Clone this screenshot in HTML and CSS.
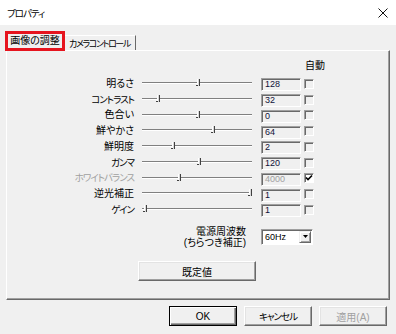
FILE: index.html
```html
<!DOCTYPE html>
<html lang="ja">
<head>
    <meta charset="UTF-8" />
    <meta name="viewport" content="width=device-width, initial-scale=1.0"/>
    <title>プロパティ</title>
    <link rel="stylesheet" href="styles.css">
</head>
<body>

    <div class="titlebar">
        <span class="title kana">プロパティ</span>
        <svg class="close" width="10" height="10" viewBox="0 0 10 10">
            <path d="M0.5 0.5 L9.5 9.5 M9.5 0.5 L0.5 9.5" stroke="#111" stroke-width="1" fill="none"/>
        </svg>
    </div>

    <div class="tabs">
        <div class="tab active">画像の調整</div>
        <div class="tab"><span class="tab-kana">カメラコントロール</span></div>
    </div>

    <div class="panel">
        <div class="head"><span class="auto-label">自動</span></div>

        <div class="row">
            <span class="label">明るさ</span>
            <div class="slider"><div class="track"></div><span class="thumb" style="left:55px"></span></div>
            <span class="edit">128</span>
            <span class="check"></span>
        </div>
        <div class="row">
            <span class="label kana">コントラスト</span>
            <div class="slider"><div class="track"></div><span class="thumb" style="left:15px"></span></div>
            <span class="edit">32</span>
            <span class="check"></span>
        </div>
        <div class="row">
            <span class="label">色合い</span>
            <div class="slider"><div class="track"></div><span class="thumb" style="left:55px"></span></div>
            <span class="edit">0</span>
            <span class="check"></span>
        </div>
        <div class="row">
            <span class="label">鮮やかさ</span>
            <div class="slider"><div class="track"></div><span class="thumb" style="left:70px"></span></div>
            <span class="edit">64</span>
            <span class="check"></span>
        </div>
        <div class="row">
            <span class="label">鮮明度</span>
            <div class="slider"><div class="track"></div><span class="thumb" style="left:30px"></span></div>
            <span class="edit">2</span>
            <span class="check"></span>
        </div>
        <div class="row">
            <span class="label kana">ガンマ</span>
            <div class="slider"><div class="track"></div><span class="thumb" style="left:56px"></span></div>
            <span class="edit">120</span>
            <span class="check"></span>
        </div>
        <div class="row disabled">
            <span class="label kana">ホワイトバランス</span>
            <div class="slider"><div class="track"></div><span class="thumb" style="left:36px"></span></div>
            <span class="edit">4000</span>
            <span class="check on">
                <svg width="8" height="8" viewBox="0 0 8 8"><path d="M1 3.5 L3 5.5 L7 1.5" stroke="#000" stroke-width="1.6" fill="none"/></svg>
            </span>
        </div>
        <div class="row">
            <span class="label">逆光補正</span>
            <div class="slider"><div class="track"></div><span class="thumb" style="left:107px"></span></div>
            <span class="edit">1</span>
            <span class="check"></span>
        </div>
        <div class="row">
            <span class="label kana">ゲイン</span>
            <div class="slider"><div class="track"></div><span class="thumb" style="left:2px"></span></div>
            <span class="edit">1</span>
            <span class="check"></span>
        </div>

        <div class="freq">
            <div class="freq-label">電源周波数<br>(ちらつき補正)</div>
            <div class="select">
                <span class="select-value">60Hz</span>
                <span class="select-btn">
                    <svg width="5" height="3" viewBox="0 0 5 3"><path d="M0 0 H5 L2.5 3 Z" fill="#000"/></svg>
                </span>
            </div>
        </div>

        <button class="btn reset-btn">既定値</button>
    </div>

    <div class="actions">
        <button class="btn default">OK</button>
        <button class="btn"><span class="kana">キャンセル</span></button>
        <button class="btn" disabled>適用(A)</button>
    </div>

</body>
</html>
```

FILE: styles.css
```css
body {
    margin: 0;
    width: 396px;
    height: 334px;
    overflow: hidden;
    background: #f0f0f0;
    font-family: "Liberation Sans", "Noto Sans CJK JP", sans-serif;
    font-size: 10px;
    font-feature-settings: "palt";
    color: #000;
}

/* katakana runs are much narrower in the original UI font */
.kana {
    font-size: 9.5px;
    letter-spacing: -1px;
}

.titlebar {
    height: 25px;
    background: #fff;
    display: flex;
    align-items: center;
    justify-content: space-between;
    padding: 0 8px 0 7px;
}

.tabs {
    display: flex;
    align-items: flex-end;
    height: 19px;
    margin-top: 6px;
    padding-left: 5px;
}

.tab {
    height: 15px;
    line-height: 15px;
    padding: 0 5px 0 4px;
    border-top: 1px solid #fff;
    border-right: 1px solid #696969;
    box-sizing: border-box;
    white-space: nowrap;
}

.tab-kana {
    font-size: 9px;
    letter-spacing: -1.4px;
}

.tab.active {
    position: relative;
    z-index: 1;
    width: 60px;
    height: 20px;
    line-height: 14px;
    margin-bottom: -1px;
    padding: 0;
    text-align: center;
    border: 3px solid #e6141e;
    background: #f0f0f0;
}

.panel {
    margin: 0 6px;
    height: 250px;
    box-sizing: border-box;
    border: 1px solid;
    border-color: #fff #696969 #696969 #fff;
    box-shadow: inset -1px -1px 0 #a0a0a0;
    padding-top: 9px;
}

.head,
.row {
    display: grid;
    grid-template-columns: 135px 119px 43px 10px;
}

.head {
    height: 12px;
    line-height: 12px;
    margin-bottom: 5px;
}

.auto-label {
    grid-column: 4;
    white-space: nowrap;
    margin-left: 1px;
}

.row {
    height: 15.75px;
    align-items: center;
}

.label {
    text-align: right;
    padding-right: 8px;
    white-space: nowrap;
    line-height: 12px;
    margin-top: -2px;
}

.row.disabled .label,
.row.disabled .edit {
    color: #a0a0a0;
}

.slider {
    position: relative;
    width: 110px;
    height: 15.75px;
}

.track {
    margin-top: 5px;
    height: 0;
    border-top: 1px solid #808080;
    border-bottom: 1px solid #fff;
}

.thumb {
    position: absolute;
    top: 2px;
    width: 1px;
    height: 7px;
    border-left: 1px solid #fff;
    border-right: 1px solid #404040;
    background: #d8d8d8;
}

.thumb::after {
    content: "";
    position: absolute;
    left: -2px;
    bottom: 0;
    width: 2px;
    height: 1px;
    background: #404040;
}

.edit {
    width: 40px;
    height: 13px;
    box-sizing: border-box;
    border: 1px solid;
    border-color: #a0a0a0 #fff #fff #a0a0a0;
    box-shadow: inset 1px 1px 0 #696969;
    background: #f0f0f0;
    padding-left: 3px;
    font-size: 9px;
    line-height: 11px;
    color: #10103a;
}

.check {
    width: 10px;
    height: 10px;
    box-sizing: border-box;
    border: 1px solid;
    border-color: #a0a0a0 #fff #fff #a0a0a0;
    box-shadow: inset 1px 1px 0 #696969;
    background: #f0f0f0;
    display: flex;
    align-items: center;
    justify-content: center;
    margin-top: -2px;
}

.check.on {
    background: #fff;
}

.freq {
    display: flex;
    align-items: center;
    height: 22px;
    margin-top: 6.75px;
}

.freq-label {
    width: 239px;
    text-align: right;
    line-height: 11px;
}

.select {
    display: flex;
    width: 52px;
    height: 16px;
    margin-left: 15px;
    box-sizing: border-box;
    border: 1px solid;
    border-color: #a0a0a0 #fff #fff #a0a0a0;
    box-shadow: inset 1px 1px 0 #696969;
    background: #fff;
    padding: 1px;
}

.select-value {
    flex: 1;
    padding-left: 2px;
    font-size: 9px;
    line-height: 12px;
}

.select-btn {
    width: 12px;
    box-sizing: border-box;
    border: 1px solid;
    border-color: #f0f0f0 #696969 #696969 #f0f0f0;
    box-shadow: inset 1px 1px 0 #fff, inset -1px -1px 0 #a0a0a0;
    background: #f0f0f0;
    display: flex;
    align-items: center;
    justify-content: center;
}

.btn {
    font-family: inherit;
    font-size: 10px;
    font-feature-settings: "palt";
    color: #000;
    height: 20px;
    width: 68px;
    padding: 0;
    background: #f0f0f0;
    border: 1px solid;
    border-color: #fff #696969 #696969 #fff;
    box-shadow: inset -1px -1px 0 #a0a0a0, inset 1px 1px 0 #e3e3e3;
}

.btn:disabled {
    color: #a0a0a0;
}

.btn.default {
    border-color: #000;
    box-shadow: inset 1px 1px 0 #fff, inset -1px -1px 0 #696969, inset -2px -2px 0 #a0a0a0;
}

.reset-btn {
    display: block;
    width: 118px;
    margin: 13.5px 0 0 131px;
}

.actions {
    display: flex;
    justify-content: flex-end;
    gap: 7px;
    margin-top: 6px;
    padding-right: 9px;
}
```
